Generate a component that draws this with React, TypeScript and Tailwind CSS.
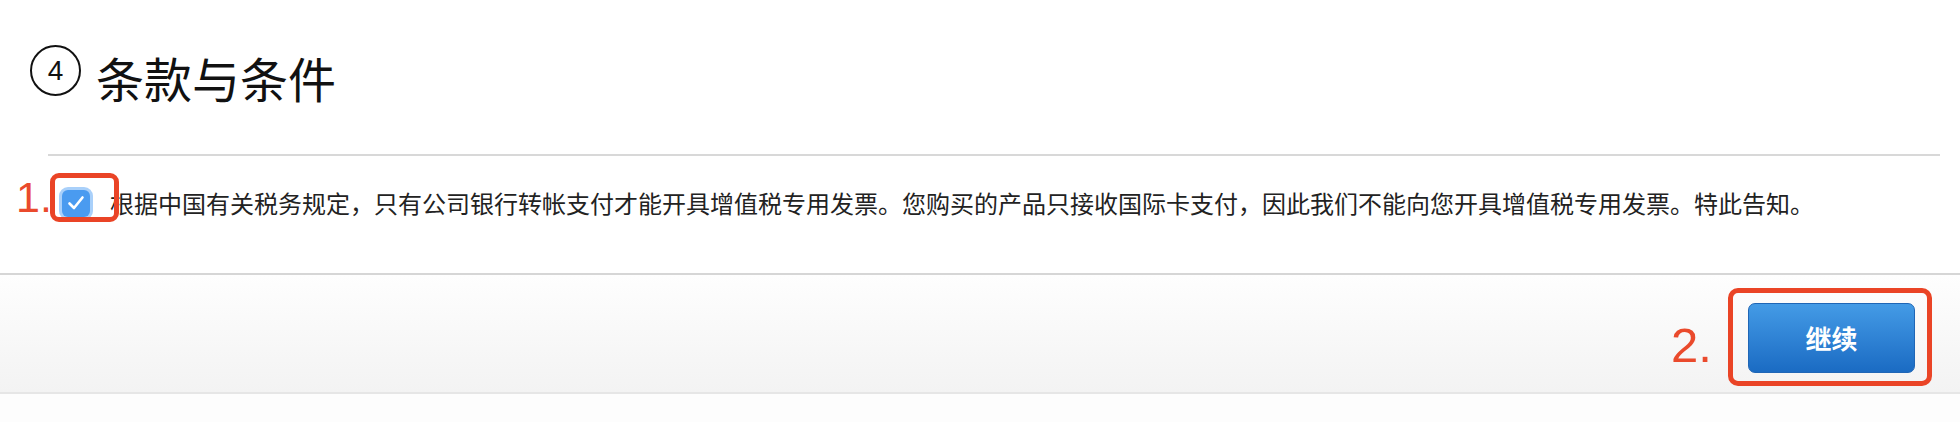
import React from "react";

export default function App() {
  return (
    <div className="relative w-[1960px] h-[422px] bg-white overflow-hidden font-['Noto_Sans_CJK_SC','Noto_Sans',sans-serif] text-[#111]">
      {/* Heading */}
      <div className="flex items-start pt-[45px] pl-[30px]">
        <div className="w-[51px] h-[51px] rounded-full border-2 border-[#111] flex items-center justify-center text-[28px] leading-none font-['Liberation_Sans',sans-serif]">
          4
        </div>
        <h2 className="ml-[15px] mt-[8px] text-[48px] leading-[48px] font-normal">条款与条件</h2>
      </div>

      {/* Divider */}
      <div className="mt-[53px] ml-[48px] mr-[20px] h-[2px] bg-[#d8d8d8]" />

      {/* Checkbox row */}
      <div className="mt-[22px] h-[50px] flex items-center pl-[62px]">
        <div className="w-[28px] h-[27px] rounded-[6px] bg-[#4a9bf0] ring-[3px] ring-[#a9d0fa] flex items-center justify-center">
          <svg width="22" height="22" viewBox="0 0 22 22" fill="none">
            <path d="M4.5 11.5 L9 16 L17.5 5.5" stroke="white" strokeWidth="2.6" strokeLinecap="round" strokeLinejoin="round" />
          </svg>
        </div>
        <p className="ml-[20px] text-[24px] leading-[30px] text-[#222]">
          根据中国有关税务规定，只有公司银行转帐支付才能开具增值税专用发票。您购买的产品只接收国际卡支付，因此我们不能向您开具增值税专用发票。特此告知。
        </p>
      </div>

      {/* Footer */}
      <div className="mt-[45px] h-[121px] border-t-2 border-b-2 border-t-[#d6d6d6] border-b-[#e6e6e6] bg-gradient-to-b from-[#fefefe] to-[#f3f3f3] flex items-center justify-end pr-[45px]">
        <button className="mt-[9px] w-[167px] h-[70px] rounded-[7px] border border-[#1f66b6] bg-gradient-to-b from-[#449be6] to-[#1a6bc3] text-white text-[26px] font-bold leading-none">
          继续
        </button>
      </div>
      <div className="h-[28px] bg-[#fdfdfd]" />

      {/* Annotations */}
      <span className="absolute left-[16px] top-[176px] text-[43px] leading-none text-[#ea4a2c] font-['Liberation_Sans',sans-serif]">1.</span>
      <div className="absolute left-[50px] top-[173px] w-[69px] h-[49px] border-[5px] border-[#ea4426] rounded-[9px]" />
      <span className="absolute left-[1671px] top-[321px] text-[49px] leading-none text-[#ea4a2c] font-['Liberation_Sans',sans-serif]">2.</span>
      <div className="absolute left-[1728px] top-[288px] w-[204px] h-[98px] border-[5px] border-[#ea4426] rounded-[10px]" />
    </div>
  );
}
